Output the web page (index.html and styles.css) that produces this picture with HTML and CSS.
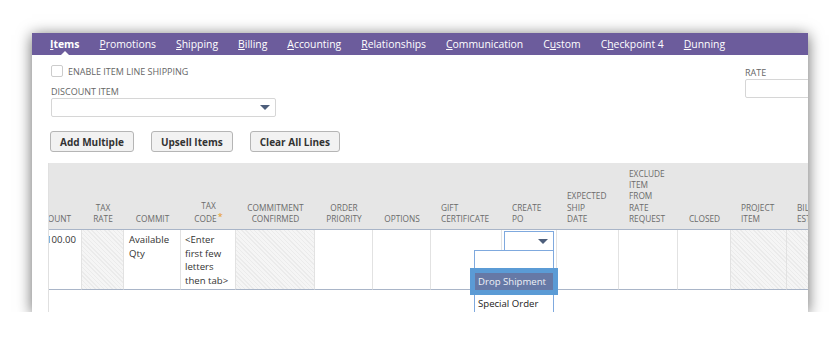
FILE: index.html
```html
<!DOCTYPE html>
<html>
<head>
<meta charset="utf-8">
<link rel="stylesheet" href="styles.css">
</head>
<body>
<div class="frame">
  <nav class="tabs">
    <span class="tab active"><u>I</u>tems</span>
    <span class="tab"><u>P</u>romotions</span>
    <span class="tab"><u>S</u>hipping</span>
    <span class="tab"><u>B</u>illing</span>
    <span class="tab"><u>A</u>ccounting</span>
    <span class="tab"><u>R</u>elationships</span>
    <span class="tab"><u>C</u>ommunication</span>
    <span class="tab">C<u>u</u>stom</span>
    <span class="tab">C<u>h</u>eckpoint 4</span>
    <span class="tab"><u>D</u>unning</span>
  </nav>

  <div class="fields">
    <div class="fleft">
      <label class="check"><span class="box"></span>ENABLE ITEM LINE SHIPPING</label>
      <div class="lbl disc-lbl">DISCOUNT ITEM</div>
      <div class="select wide"><span class="arrow"></span></div>
    </div>
    <div class="fright">
      <div class="lbl">RATE</div>
      <div class="rate-input"></div>
    </div>
  </div>

  <div class="buttons">
    <button class="btn">Add Multiple</button>
    <button class="btn">Upsell Items</button>
    <button class="btn">Clear All Lines</button>
  </div>

  <div class="gwrap">
    <div class="grid">
      <div class="hc right"><div>AMOUNT</div></div>
      <div class="hc center"><div>TAX<br>RATE</div></div>
      <div class="hc center"><div>COMMIT</div></div>
      <div class="hc center"><div>TAX<br>CODE<span class="req">*</span></div></div>
      <div class="hc center"><div>COMMITMENT<br>CONFIRMED</div></div>
      <div class="hc center"><div>ORDER<br>PRIORITY</div></div>
      <div class="hc center"><div>OPTIONS</div></div>
      <div class="hc"><div>GIFT<br>CERTIFICATE</div></div>
      <div class="hc"><div>CREATE<br>PO</div></div>
      <div class="hc"><div>EXPECTED<br>SHIP<br>DATE</div></div>
      <div class="hc"><div>EXCLUDE<br>ITEM<br>FROM<br>RATE<br>REQUEST</div></div>
      <div class="hc center"><div>CLOSED</div></div>
      <div class="hc"><div>PROJECT<br>ITEM</div></div>
      <div class="hc"><div>BILLING<br>ESTIMATE</div></div>

      <div class="bc right">100.00</div>
      <div class="bc hatch"></div>
      <div class="bc">Available<br>Qty</div>
      <div class="bc tc">&lt;Enter<br>first few<br>letters<br>then tab&gt;</div>
      <div class="bc hatch"></div>
      <div class="bc"></div>
      <div class="bc"></div>
      <div class="bc"></div>
      <div class="bc po">
        <div class="select po-select"><span class="arrow"></span></div>
        <div class="dropdown">
          <div class="opt blank"></div>
          <div class="opt sel">Drop Shipment</div>
          <div class="opt special">Special Order</div>
        </div>
      </div>
      <div class="bc"></div>
      <div class="bc"></div>
      <div class="bc"></div>
      <div class="bc hatch"></div>
      <div class="bc hatch"></div>
    </div>
  </div>
</div>
</body>
</html>
```
FILE: styles.css
```css
body {
  margin: 0;
  background: #ffffff;
  font-family: "Open Sans", "Liberation Sans", sans-serif;
}

.frame {
  margin: 33px 0 0 32px;
  width: 776px;
  height: 279px;
  background: #ffffff;
  box-shadow: 0 2px 14px rgba(0, 0, 0, 0.6);
  overflow: hidden;
  display: flex;
  flex-direction: column;
}

.tabs {
  flex: none;
  height: 22px;
  background: #6c5c9c;
  display: flex;
  align-items: center;
  gap: 20px;
  padding-left: 18px;
  color: #ffffff;
  font-size: 10.4px;
}

.tab {
  position: relative;
  line-height: 22px;
  white-space: nowrap;
}

.tab u {
  text-underline-offset: 1px;
}

.tab.active {
  font-weight: 700;
}

.tab.active::after {
  content: "";
  position: absolute;
  left: 50%;
  bottom: 0;
  margin-left: -4px;
  border-left: 4px solid transparent;
  border-right: 4px solid transparent;
  border-bottom: 4px solid #ffffff;
}

.fields {
  flex: none;
  display: flex;
  padding: 10px 0 0 19px;
}

.fleft {
  flex: none;
  width: 694px;
}

.check {
  display: flex;
  align-items: center;
  gap: 5px;
  height: 12px;
  font-size: 9px;
  color: #666666;
}

.box {
  width: 12px;
  height: 12px;
  box-sizing: border-box;
  border: 1px solid #cccccc;
  border-radius: 2px;
  background: #ffffff;
}

.lbl {
  font-size: 9px;
  line-height: 12px;
  color: #666666;
}

.disc-lbl {
  margin-top: 9px;
}

.select {
  display: flex;
  align-items: center;
  justify-content: flex-end;
  box-sizing: border-box;
  background: #ffffff;
}

.select.wide {
  width: 225px;
  height: 19px;
  border: 1px solid #d6d6d6;
  border-radius: 2px;
  padding-right: 5px;
}

.arrow {
  width: 0;
  height: 0;
  border-left: 5px solid transparent;
  border-right: 5px solid transparent;
  border-top: 5px solid #4d5e7b;
}

.fright {
  flex: none;
  padding-top: 2px;
}

.rate-input {
  width: 90px;
  height: 19px;
  box-sizing: border-box;
  border: 1px solid #d6d6d6;
  border-radius: 2px;
}

.buttons {
  flex: none;
  display: flex;
  gap: 17px;
  margin: 14px 0 0 18px;
}

.btn {
  height: 21px;
  padding: 0 9px;
  font-family: "Open Sans", "Liberation Sans", sans-serif;
  font-weight: 700;
  font-size: 10px;
  color: #333333;
  background: #f2f2f2;
  border: 1px solid #b5b5b5;
  border-radius: 3px;
}

.gwrap {
  flex: 1;
  margin: 11px 0 0 16px;
  border-left: 1px solid #e0e0e0;
  overflow: hidden;
}

.grid {
  display: grid;
  grid-template-columns: 60px 42px 57px 55px 79px 58px 58px 71px 55px 62px 59px 53px 56px 60px;
  margin-left: -27px;
  width: 766px;
}

.hc {
  display: flex;
  flex-direction: column;
  justify-content: flex-end;
  background: #e6e6e6;
  padding: 5px 4px 5px 10px;
  font-size: 8.3px;
  line-height: 11.2px;
  color: #6b6b6b;
  white-space: nowrap;
  border-bottom: 1px solid #a9b5c8;
}

.hc.center {
  text-align: center;
  padding-left: 2px;
  padding-right: 2px;
}

.hc.right {
  text-align: right;
  padding-right: 11px;
}

.req {
  color: #e69a21;
  font-size: 9px;
  vertical-align: 2px;
  margin-left: 1px;
}

.bc {
  padding: 3px 4px 2px 5px;
  font-size: 9.6px;
  line-height: 13.5px;
  color: #333333;
  border-right: 1px solid #e2e2e2;
  border-bottom: 1px solid #a9b5c8;
  white-space: nowrap;
}

.bc.right {
  text-align: right;
  padding-right: 5px;
}

.bc.tc {
  padding-left: 4px;
}

.bc.hatch {
  background: repeating-linear-gradient(45deg, #ebebeb 0 1px, #f5f5f5 1px 3px);
}

.bc.po {
  position: relative;
  padding: 1px 2px 0 2px;
}

.po-select {
  width: 50px;
  height: 20px;
  border: 1px solid #7fa9de;
  padding-right: 5px;
}

.dropdown {
  position: absolute;
  left: -28px;
  top: 20px;
  width: 80px;
  height: 90px;
  box-sizing: border-box;
  background: #ffffff;
  border: 1px solid #7fa9de;
  z-index: 2;
}

.opt {
  font-size: 9.6px;
  color: #222222;
  padding-left: 3px;
  white-space: nowrap;
}

.opt.blank {
  height: 22px;
}

.opt.sel {
  height: 17px;
  line-height: 17px;
  background: #6679a6;
  color: #eef1f7;
  outline: 5px solid #5b9bd5;
}

.opt.special {
  margin-top: 5px;
  line-height: 18px;
}
```
